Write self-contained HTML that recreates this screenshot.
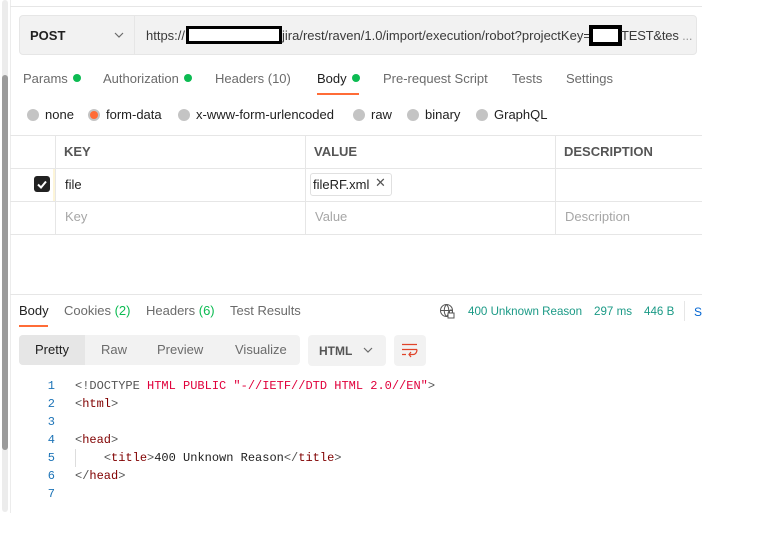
<!DOCTYPE html>
<html><head><style>
*{margin:0;padding:0;box-sizing:border-box}
body{width:776px;height:552px;background:#fff;font-family:"Liberation Sans",sans-serif;font-size:13px;color:#212121;position:relative;overflow:hidden}
.a{position:absolute;white-space:nowrap}
.g{color:#6b6b6b}
.dot{display:inline-block;width:8px;height:8px;border-radius:50%;background:#0cbb52;margin-left:5px;vertical-align:1px}
.rad{display:inline-block;width:12px;height:12px;border-radius:50%;background:#c4c4c4;vertical-align:-2px;margin-right:6px}
.hl{position:absolute;height:1px;background:#e6e6e6}
.vl{position:absolute;width:1px;background:#e6e6e6}
.mono{font-family:"Liberation Mono",monospace;font-size:12px}
</style></head><body>
<div class="a" style="left:2px;top:0;width:6px;height:512px;background:#ececec;border-radius:3px"></div>
<div class="a" style="left:2px;top:75px;width:6px;height:375px;background:#9b9b9b;border-radius:3px"></div>
<div class="vl" style="left:10px;top:0;height:513px;background:#ececec"></div>
<div class="hl" style="left:10px;top:6px;width:692px"></div>

<div class="a" style="left:19px;top:15px;width:678px;height:40px;background:#f2f2f2;border:1px solid #e6e6e6;border-radius:4px"></div>
<div class="vl" style="left:134px;top:16px;height:38px"></div>
<div class="a" style="left:30px;top:28px;font-weight:bold;font-size:13px">POST</div>
<svg class="a" style="left:114px;top:31px" width="10" height="8"><path d="M1 2l4 4 4-4" stroke="#6b6b6b" fill="none" stroke-width="1.2"/></svg>
<div class="a" style="left:146px;top:28px;color:#3a3a3a">https://</div>
<div class="a" style="left:186px;top:26px;width:96px;height:18px;background:#fff;border:3px solid #000"></div>
<div class="a" style="left:282px;top:28px;color:#3a3a3a">jira/rest/raven/1.0/import/execution/robot?projectKey=</div>
<div class="a" style="left:589px;top:25px;width:33px;height:21px;background:#fff;border:4px solid #000"></div>
<div class="a" style="left:621px;top:28px;color:#3a3a3a;letter-spacing:-0.2px">TEST&amp;tes <span style="color:#999">...</span></div>

<div class="a g" style="left:23px;top:71px">Params<span class="dot"></span></div>
<div class="a g" style="left:103px;top:71px">Authorization<span class="dot"></span></div>
<div class="a g" style="left:215px;top:71px">Headers <span style="color:#6b6b6b">(10)</span></div>
<div class="a" style="left:317px;top:71px">Body<span class="dot"></span></div>
<div class="a" style="left:317px;top:93px;width:42px;height:2px;background:#ff6c37"></div>
<div class="a g" style="left:383px;top:71px">Pre-request Script</div>
<div class="a g" style="left:512px;top:71px">Tests</div>
<div class="a g" style="left:566px;top:71px">Settings</div>

<div class="a" style="left:27px;top:107px"><span class="rad"></span>none</div>
<div class="a" style="left:88px;top:107px"><span class="rad" style="background:#ff6c37;border:2px solid #c4c4c4"></span>form-data</div>
<div class="a" style="left:178px;top:107px"><span class="rad"></span>x-www-form-urlencoded</div>
<div class="a" style="left:353px;top:107px"><span class="rad"></span>raw</div>
<div class="a" style="left:407px;top:107px"><span class="rad"></span>binary</div>
<div class="a" style="left:476px;top:107px"><span class="rad"></span>GraphQL</div>

<div class="hl" style="left:10px;top:135px;width:692px"></div>
<div class="hl" style="left:10px;top:168px;width:692px"></div>
<div class="hl" style="left:10px;top:201px;width:692px"></div>
<div class="hl" style="left:10px;top:234px;width:692px"></div>
<div class="vl" style="left:55px;top:135px;height:100px"></div>
<div class="vl" style="left:305px;top:135px;height:100px"></div>
<div class="vl" style="left:555px;top:135px;height:100px"></div>
<div class="a" style="left:53px;top:169px;width:2px;height:32px;background:#fdf5d8"></div>
<div class="a" style="left:64px;top:144px;font-weight:bold;color:#555">KEY</div>
<div class="a" style="left:314px;top:144px;font-weight:bold;color:#555">VALUE</div>
<div class="a" style="left:564px;top:144px;font-weight:bold;color:#555">DESCRIPTION</div>
<div class="a" style="left:34px;top:176px;width:16px;height:16px;background:#212121;border-radius:3px"></div>
<svg class="a" style="left:34px;top:176px" width="16" height="16"><path d="M4 8.5l3 3 5-6" stroke="#fff" stroke-width="2" fill="none"/></svg>
<div class="a" style="left:65px;top:177px">file</div>
<div class="a" style="left:310px;top:173px;width:82px;height:23px;border:1px solid #e0e0e0;border-radius:3px"></div>
<div class="a" style="left:313px;top:177px">fileRF.xml</div>
<div class="a" style="left:375px;top:175px;color:#555;font-size:13px">✕</div>
<div class="a" style="left:65px;top:209px;color:#a6a6a6">Key</div>
<div class="a" style="left:315px;top:209px;color:#a6a6a6">Value</div>
<div class="a" style="left:565px;top:209px;color:#a6a6a6">Description</div>

<div class="hl" style="left:10px;top:294px;width:692px"></div>

<div class="a" style="left:19px;top:303px">Body</div>
<div class="a" style="left:19px;top:325px;width:29px;height:2px;background:#ff6c37"></div>
<div class="a g" style="left:64px;top:303px">Cookies <span style="color:#0cbb52">(2)</span></div>
<div class="a g" style="left:146px;top:303px">Headers <span style="color:#0cbb52">(6)</span></div>
<div class="a g" style="left:230px;top:303px">Test Results</div>
<svg class="a" style="left:439px;top:303px" width="17" height="17" fill="none" stroke="#555" stroke-width="1"><circle cx="7.5" cy="7.5" r="6"/><path d="M1.5 7.5h12M7.5 1.5c-3 3-3 9 0 12M7.5 1.5c3 3 3 9 0 12"/><rect x="9" y="10" width="6" height="5" fill="#fff"/><path d="M10.5 10v-1.5a1.5 1.5 0 013 0V10"/></svg>
<div class="a" style="left:468px;top:305px;font-size:11.6px;color:#1b9a86">400 Unknown Reason</div>
<div class="a" style="left:594px;top:305px;font-size:11.6px;color:#1b9a86">297 ms</div>
<div class="a" style="left:644px;top:305px;font-size:11.6px;color:#1b9a86">446 B</div>
<div class="vl" style="left:684px;top:301px;height:20px"></div>
<div class="a" style="left:694px;top:305px;font-size:12px;color:#0265d2">S</div>

<div class="a" style="left:19px;top:335px;width:281px;height:30px;background:#f2f2f2;border-radius:4px"></div>
<div class="a" style="left:19px;top:335px;width:66px;height:30px;background:#e6e6e6;border-radius:4px 0 0 4px"></div>
<div class="a" style="left:35px;top:342px">Pretty</div>
<div class="a g" style="left:101px;top:342px">Raw</div>
<div class="a g" style="left:157px;top:342px">Preview</div>
<div class="a g" style="left:235px;top:342px">Visualize</div>
<div class="a" style="left:308px;top:335px;width:78px;height:31px;background:#f2f2f2;border-radius:4px"></div>
<div class="a" style="left:319px;top:344px;font-weight:bold;font-size:12px;color:#555">HTML</div>
<svg class="a" style="left:363px;top:347px" width="10" height="7"><path d="M1 1l4 4 4-4" stroke="#6b6b6b" fill="none" stroke-width="1.2"/></svg>
<div class="a" style="left:394px;top:335px;width:32px;height:31px;background:#f2f2f2;border-radius:4px"></div>
<svg class="a" style="left:401px;top:343px" width="18" height="16" fill="none" stroke="#e0442a" stroke-width="1.2"><path d="M1 1.5h15M1 6.5h15M1 11.5h4M16 6.5c0 0 0 5-4 5h-4M10 9l-2 2.5 2 2.5"/></svg>

<div class="a mono" style="left:45px;top:377px;line-height:18px;color:#1d74b7;text-align:right;width:10px">1<br>2<br>3<br>4<br>5<br>6<br>7</div>
<div class="a" style="left:75px;top:449px;width:1px;height:18px;background:#ddd"></div>
<div class="a mono" style="left:75px;top:377px;line-height:18px;color:#800000">
<span style="color:#555">&lt;!DOCTYPE </span><span style="color:#e0003b">HTML PUBLIC "-//IETF//DTD HTML 2.0//EN"</span><span style="color:#555">&gt;</span><br>
<span style="color:#555">&lt;</span>html<span style="color:#555">&gt;</span><br>
<br>
<span style="color:#555">&lt;</span>head<span style="color:#555">&gt;</span><br>
&nbsp;&nbsp;&nbsp;&nbsp;<span style="color:#555">&lt;</span>title<span style="color:#555">&gt;</span><span style="color:#212121">400 Unknown Reason</span><span style="color:#555">&lt;/</span>title<span style="color:#555">&gt;</span><br>
<span style="color:#555">&lt;/</span>head<span style="color:#555">&gt;</span>
</div>
</body></html>
